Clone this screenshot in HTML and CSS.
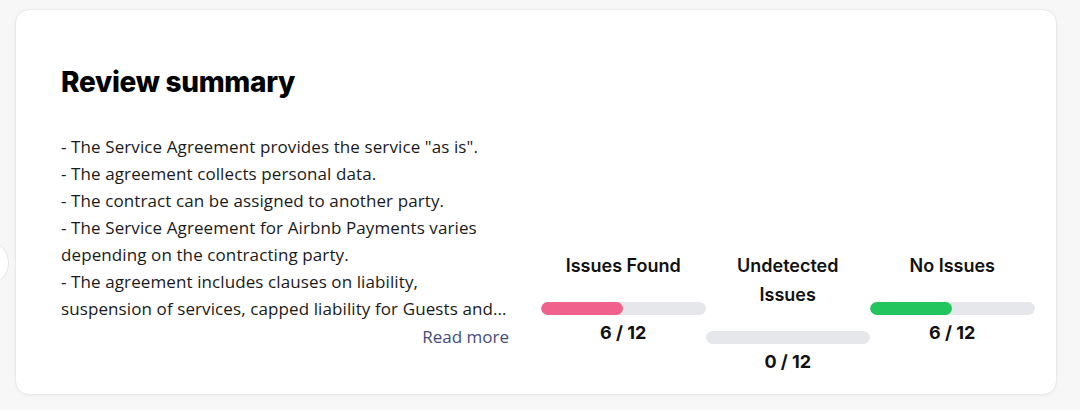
FILE: index.html
```html
<!DOCTYPE html>
<html lang="en">
<head>
<meta charset="utf-8">
<title>Review summary</title>
<link rel="stylesheet" href="styles.css">
</head>
<body>
<div class="page">
  <div class="nav-circle"></div>
  <section class="card">
    <h2 class="title">Review summary</h2>
    <div class="row">
      <div class="summary">
        <p class="summary-text">- The Service Agreement provides the service "as is".<br>- The agreement collects personal data.<br>- The contract can be assigned to another party.<br>- The Service Agreement for Airbnb Payments varies depending on the contracting party.<br>- The agreement includes clauses on liability, suspension of services, capped liability for Guests and...</p>
        <a class="read-more" href="#">Read more</a>
      </div>
      <div class="stats">
        <div class="stat">
          <div class="stat-label">Issues Found</div>
          <div class="bar"><div class="bar-fill fill-pink" style="width: 50%"></div></div>
          <div class="stat-count">6 / 12</div>
        </div>
        <div class="stat">
          <div class="stat-label">Undetected<br>Issues</div>
          <div class="bar"><div class="bar-fill" style="width: 0%"></div></div>
          <div class="stat-count">0 / 12</div>
        </div>
        <div class="stat">
          <div class="stat-label">No Issues</div>
          <div class="bar"><div class="bar-fill fill-green" style="width: 50%"></div></div>
          <div class="stat-count">6 / 12</div>
        </div>
      </div>
    </div>
  </section>
</div>
</body>
</html>
```

FILE: styles.css
```css
* { box-sizing: border-box; }

html, body {
  margin: 0;
  padding: 0;
  background: #f7f7f7;
  width: 1080px;
  height: 410px;
  overflow: hidden;
}

.page {
  position: relative;
  padding: 9px 24px 0 15px;
}

.nav-circle {
  position: absolute;
  left: -37px;
  top: 240px;
  width: 46px;
  height: 46px;
  border-radius: 50%;
  background: #ffffff;
  border: 1px solid #e6e6e6;
}

.card {
  width: 1042px;
  height: 386px;
  background: #ffffff;
  border: 1px solid #e9e9e9;
  border-radius: 14px;
  box-shadow: 0 1px 3px rgba(0, 0, 0, 0.04);
  padding: 55px 22px 0 45px;
}

.title {
  margin: 0;
  font-family: Inter, "Liberation Sans", sans-serif;
  font-weight: 800;
  font-size: 28px;
  line-height: 34px;
  color: #000000;
  letter-spacing: -0.3px;
}

.row {
  display: flex;
  align-items: flex-start;
  margin-top: 34px;
}

.summary {
  width: 448px;
  flex: none;
  display: flex;
  flex-direction: column;
  font-family: "Open Sans", "Noto Sans", sans-serif;
  font-size: 17px;
  letter-spacing: 0.1px;
  color: #1a1a1a;
}

.summary-text {
  margin: 0;
  line-height: 27px;
}

.read-more {
  align-self: flex-end;
  line-height: 27px;
  margin-top: 1px;
  color: #454c7a;
  text-decoration: none;
  letter-spacing: 0;
}

.stats {
  display: flex;
  margin-left: 32px;
  margin-top: 118px;
}

.stat {
  width: 164.5px;
  display: flex;
  flex-direction: column;
  align-items: center;
  font-family: Inter, "Liberation Sans", sans-serif;
  color: #111111;
}

.stat-label {
  font-size: 18px;
  font-weight: 600;
  line-height: 29px;
  text-align: center;
}

.bar {
  width: 100%;
  height: 13px;
  margin-top: 22px;
  border-radius: 7px;
  background: #e5e7eb;
  overflow: hidden;
}

.bar-fill {
  height: 100%;
  border-radius: 7px;
}

.fill-pink { background: #f0628c; }
.fill-green { background: #22c55e; }

.stat-count {
  margin-top: 6px;
  font-size: 18px;
  font-weight: 700;
  line-height: 24px;
}
```
